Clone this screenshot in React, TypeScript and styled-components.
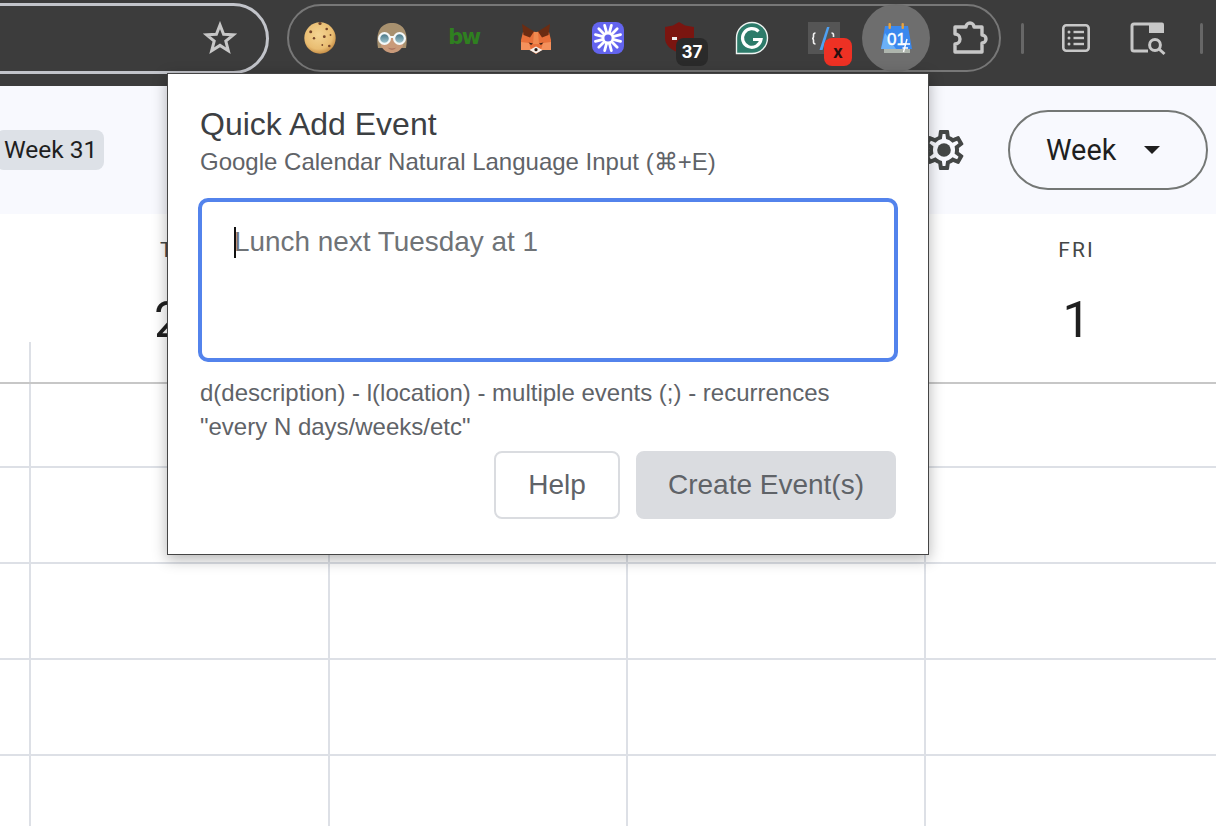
import React from "react";
import styled, { createGlobalStyle } from "styled-components";

const GlobalStyle = createGlobalStyle`
  html, body { margin: 0; padding: 0; background: #fff; }
  * { box-sizing: border-box; }
`;

const Page = styled.div`
  position: relative;
  width: 1216px;
  height: 826px;
  overflow: hidden;
  display: flex;
  flex-direction: column;
  background: #fff;
  font-family: Roboto, "Liberation Sans", sans-serif;
`;

/* ---------- browser toolbar ---------- */
const Toolbar = styled.header`
  flex: none;
  height: 86px;
  padding-bottom: 10px;
  background: #3c3c3c;
  display: flex;
  align-items: center;
  gap: 18px;
`;
const AddressBar = styled.div`
  flex: none;
  width: 309px;
  height: 71px;
  margin-left: -40px;
  padding-right: 29px;
  border: 3px solid #c2c4ca;
  border-radius: 36px;
  display: flex;
  align-items: center;
  justify-content: flex-end;
`;
const ExtensionPill = styled.div`
  flex: none;
  width: 714px;
  height: 68px;
  padding-left: 11px;
  border: 2px solid #777;
  border-radius: 34px;
  display: flex;
  align-items: center;
  gap: 32px;
`;
const ExtensionButton = styled.div<{ $active?: boolean }>`
  position: relative;
  flex: none;
  width: 40px;
  height: 40px;
  display: flex;
  align-items: center;
  justify-content: center;
  &::before {
    content: "";
    display: ${(p) => (p.$active ? "block" : "none")};
    position: absolute;
    left: -14px;
    top: -14px;
    width: 68px;
    height: 68px;
    border-radius: 50%;
    background: #6e6e6e;
  }
  svg { position: relative; display: block; }
`;
const LogoText = styled.span`
  font-family: "DejaVu Sans", sans-serif;
  font-weight: 700;
  font-size: 21px;
  letter-spacing: -1.5px;
  line-height: 1;
  color: #2f8020;
  margin-top: -1px;
`;
const Badge = styled.span<{ $tone: "dark" | "red" }>`
  position: absolute;
  top: 20px;
  left: ${(p) => (p.$tone === "dark" ? "16px" : "20px")};
  width: ${(p) => (p.$tone === "dark" ? "32px" : "28px")};
  height: 28px;
  border-radius: 8px;
  background: ${(p) => (p.$tone === "dark" ? "#2a2a2a" : "#ee3124")};
  color: ${(p) => (p.$tone === "dark" ? "#fff" : "#2a1010")};
  font-family: Inter, "Liberation Sans", sans-serif;
  font-weight: 700;
  font-size: 17px;
  line-height: 28px;
  text-align: center;
`;
const ToolCluster = styled.div`
  flex: none;
  margin-left: 2px;
  display: flex;
  align-items: center;
  gap: 32px;
`;
const ToolSeparator = styled.span`
  flex: none;
  width: 3px;
  height: 31px;
  border-radius: 2px;
  background: #676767;
`;
const ToolIcon = styled.div`
  flex: none;
  width: 40px;
  height: 40px;
  svg { display: block; }
`;

/* ---------- calendar header ---------- */
const CalendarBar = styled.div`
  flex: none;
  height: 128px;
  background: #f8f9fe;
  display: flex;
  align-items: center;
  justify-content: space-between;
  padding-right: 8px;
`;
const WeekChip = styled.span`
  margin-left: -4px;
  padding: 0 7px 0 8px;
  height: 40px;
  border-radius: 8px;
  background: #dde1e7;
  color: #1f1f1f;
  font-size: 24.5px;
  line-height: 40px;
`;
const HeaderActions = styled.div`
  display: flex;
  align-items: center;
  gap: 40px;
`;
const ViewButton = styled.div`
  width: 200px;
  height: 80px;
  padding: 0 46px 0 36px;
  border: 2px solid #747775;
  border-radius: 40px;
  display: flex;
  align-items: center;
  justify-content: space-between;
  color: #1f1f1f;
  font-size: 28.8px;
`;
const Caret = styled.span`
  width: 0;
  height: 0;
  border-left: 8px solid transparent;
  border-right: 8px solid transparent;
  border-top: 8px solid #1f1f1f;
`;

/* ---------- week grid ---------- */
const columns = "29px 299px 298px 298px 298px";
const DayHeader = styled.div`
  flex: none;
  height: 170px;
  display: grid;
  grid-template-columns: ${columns};
  border-bottom: 2px solid #c7c7c7;
`;
const GutterTick = styled.div`
  justify-self: end;
  align-self: end;
  width: 0;
  height: 40px;
  margin-right: -2px;
  border-left: 2px solid #dde0e6;
`;
const DayCell = styled.div`
  padding: 25px 0 0 7px;
  display: flex;
  flex-direction: column;
  align-items: center;
`;
const DayName = styled.span`
  font-size: 21px;
  font-weight: 400;
  line-height: 22px;
  letter-spacing: 2px;
  color: #444746;
`;
const DayNumber = styled.span`
  margin-top: 30px;
  font-size: 50px;
  line-height: 58px;
  color: #1f1f1f;
`;
const GridRow = styled.div<{ $height: number }>`
  flex: none;
  height: ${(p) => p.$height}px;
  display: grid;
  grid-template-columns: ${columns};
  border-bottom: 2px solid #dde0e6;
`;
const HourCell = styled.div`
  border-left: 2px solid #dde0e6;
`;

/* ---------- popup ---------- */
const Popup = styled.section`
  position: absolute;
  left: 167px;
  top: 73px;
  width: 762px;
  height: 482px;
  padding: 32px 31px 0;
  background: #fff;
  border: 1px solid #454545;
  box-shadow: 0 4px 14px rgba(0, 0, 0, 0.3);
  font-family: "Liberation Sans", Arial, sans-serif;
  display: flex;
  flex-direction: column;
`;
const Title = styled.h1`
  margin: 0;
  padding-left: 1px;
  font-size: 32px;
  font-weight: 400;
  line-height: 36px;
  color: #3c4043;
`;
const Subtitle = styled.p`
  margin: 3px 0 0;
  padding-left: 1px;
  font-size: 24px;
  line-height: 34px;
  color: #5f6368;
`;
const FieldWrap = styled.div`
  position: relative;
  margin: 19px -1px 0;
  height: 164px;
`;
const Field = styled.textarea`
  display: block;
  width: 100%;
  height: 100%;
  padding: 21px 32px;
  border: 4px solid #5383ec;
  border-radius: 10px;
  outline: none;
  resize: none;
  background: #fff;
  font-family: inherit;
  font-size: 27.9px;
  line-height: 38px;
  &::placeholder { color: #6f7377; opacity: 1; }
`;
const TextCursor = styled.span`
  position: absolute;
  left: 36px;
  top: 29px;
  width: 2px;
  height: 31px;
  background: #111;
`;
const Hint = styled.p`
  margin: 14px 0 0;
  padding-left: 1px;
  font-size: 24px;
  line-height: 34px;
  color: #5f6368;
`;
const Actions = styled.div`
  margin-top: 7px;
  display: flex;
  justify-content: flex-end;
  gap: 16px;
  padding-right: 1px;
`;
const ActionButton = styled.button<{ $primary?: boolean }>`
  width: ${(p) => (p.$primary ? "260px" : "126px")};
  height: 68px;
  padding: 0;
  border: 2px solid #dadce0;
  border-radius: 8px;
  background: ${(p) => (p.$primary ? "#dadce0" : "#fff")};
  color: #5f6368;
  font-family: inherit;
  font-size: 28px;
`;

/* ---------- icons ---------- */
const Icon40: React.FC<{ children: React.ReactNode }> = ({ children }) => (
  <svg width="40" height="40" viewBox="0 0 40 40">{children}</svg>
);

const StarIcon = () => (
  <svg width="34" height="34" viewBox="0 0 34 34">
    <polygon
      points="17,4 20.6,13.2 30.4,13.8 22.8,20.1 25.3,29.7 17,24.4 8.7,29.7 11.2,20.1 3.6,13.8 13.4,13.2"
      fill="none"
      stroke="#c7c7c7"
      strokeWidth="3"
      strokeLinejoin="miter"
    />
  </svg>
);

const cookieSpots = [
  [20, 5.5, 1.6], [10.7, 13.7, 1.5], [26.7, 11, 1.3], [14, 20.3, 1.2],
  [24.3, 18.7, 1.4], [29.3, 28, 1.3], [22.3, 27, 0.9], [30.5, 17, 0.9],
];
const CookieIcon = () => (
  <Icon40>
    <defs>
      <radialGradient id="cookieFill" cx="45%" cy="40%" r="60%">
        <stop offset="0%" stopColor="#f4d493" />
        <stop offset="75%" stopColor="#e9bd72" />
        <stop offset="100%" stopColor="#c99149" />
      </radialGradient>
    </defs>
    <circle cx="20" cy="20" r="15.7" fill="url(#cookieFill)" />
    {cookieSpots.map(([x, y, r]) => (
      <circle key={`${x}-${y}`} cx={x} cy={y} r={r} fill="#75452a" />
    ))}
  </Icon40>
);

const AvatarIcon = () => (
  <Icon40>
    <defs>
      <linearGradient id="lensFill" x1="0" y1="0" x2="0" y2="1">
        <stop offset="0%" stopColor="#3f6f80" />
        <stop offset="100%" stopColor="#a9cdd6" />
      </linearGradient>
    </defs>
    <path d="M6 30 C3 12 10 5 20 5 C30 5 37 12 34 30 Z" fill="#a8916f" />
    <path d="M9 21 C14 17 26 17 31 21 V28 C28 33 24 35 20 35 C16 35 12 33 9 28 Z" fill="#c99a7a" />
    <path d="M15.5 29.5 Q20 31.5 24.5 29.5 Q20 34 15.5 29.5 Z" fill="#a86e5c" />
    <circle cx="12.5" cy="20.5" r="5.4" fill="url(#lensFill)" stroke="#f4f8f8" strokeWidth="2.2" />
    <circle cx="27.5" cy="20.5" r="5.4" fill="url(#lensFill)" stroke="#f4f8f8" strokeWidth="2.2" />
    <path d="M17.5 19 H22.5" stroke="#f4f8f8" strokeWidth="2" />
  </Icon40>
);

const FoxIcon = () => (
  <Icon40>
    <polygon points="7,14 13,13 20,14 27,13 33,14 35,22 35,32 26,32 23,34 20,36 17,34 14,32 5,32 5,22" fill="#e8703a" />
    <polygon points="6,6 18,13.5 14,19.5 7.5,17" fill="#6b2c12" />
    <polygon points="34,6 22,13.5 26,19.5 32.5,17" fill="#6b2c12" />
    <polygon points="5,24 13,25 15,32 5,32" fill="#f4915c" />
    <polygon points="35,24 27,25 25,32 35,32" fill="#f4915c" />
    <polygon points="18,14 22,14 23,26 17,26" fill="#f08a50" />
    <polygon points="12.5,24.5 17,25.5 15,27" fill="#3a2014" />
    <polygon points="27.5,24.5 23,25.5 25,27" fill="#3a2014" />
    <polygon points="13.5,32 20,28.5 26.5,32 20,35.5" fill="#f6f0ea" />
    <circle cx="20" cy="31.7" r="1.6" fill="#2c1c14" />
  </Icon40>
);

const BurstIcon = () => {
  const spokes = Array.from({ length: 12 }, (_, i) => (i * Math.PI * 2) / 12 + Math.PI / 12);
  return (
    <Icon40>
      <rect x="4" y="4" width="32" height="32" rx="8" fill="#6364ee" />
      {spokes.map((a) => (
        <line
          key={a}
          x1={20 + 6 * Math.cos(a)}
          y1={20 + 6 * Math.sin(a)}
          x2={20 + 13 * Math.cos(a)}
          y2={20 + 13 * Math.sin(a)}
          stroke="#fff"
          strokeWidth="2.8"
          strokeLinecap="round"
        />
      ))}
      <circle cx="20" cy="20" r="5" fill="#6364ee" stroke="#fff" strokeWidth="2.8" />
    </Icon40>
  );
};

const ShieldIcon = () => (
  <Icon40>
    <path d="M19 4 L25 7.5 L34 9 V20 C34 28 26 32 19 35 C12 32 5 28 5 20 V9 L13 7.5 Z" fill="#7a1510" />
    <rect x="12" y="19" width="5" height="3" fill="#eee" />
  </Icon40>
);

const GrammarlyIcon = () => (
  <Icon40>
    <path d="M20 4.5 A15.5 15.5 0 1 1 20 35.5 H4.5 V20 A15.5 15.5 0 0 1 20 4.5 Z" fill="#2d7b6a" stroke="#eef3f1" strokeWidth="1.4" />
    <path d="M26.5 13.5 A9.3 9.3 0 1 0 29 21.5 H21" fill="none" stroke="#fff" strokeWidth="3.2" />
  </Icon40>
);

const DevIcon = () => (
  <Icon40>
    <rect x="4" y="4" width="32" height="32" fill="#555" />
    <path d="M11.5 15 Q9.5 15 9.5 17 V19 Q9.5 20.5 8 20.5 Q9.5 20.5 9.5 22 V24 Q9.5 26 11.5 26" fill="none" stroke="#f2f2f2" strokeWidth="1.6" />
    <path d="M27.5 15 Q29.5 15 29.5 17 V19" fill="none" stroke="#f2f2f2" strokeWidth="1.6" />
    <polygon points="23,9 25.5,9 18.5,32 15.5,32" fill="#4ea1f3" />
  </Icon40>
);

const CalendarIcon = () => (
  <Icon40>
    <polygon points="9,8 32,8 36,31 5,31" fill="#3a88ee" />
    <polygon points="5,31 9,15 20,31" fill="#6bb0f7" />
    <rect x="12.5" y="5" width="2.4" height="6" rx="1" fill="#e8a23c" />
    <rect x="25.5" y="5" width="2.4" height="6" rx="1" fill="#e8a23c" />
    <rect x="8" y="31" width="26" height="4" fill="#aeb5ad" />
    <text x="11" y="27" fontFamily="'Liberation Sans', sans-serif" fontSize="17" stroke="#fff" strokeWidth="0.4" fill="#fff">01</text>
    <path d="M31 21 L27.5 34 M27 26 H34 M26.5 30 H32" stroke="#fff" strokeWidth="1.4" fill="none" />
  </Icon40>
);

const PuzzleIcon = () => (
  <Icon40>
    <path d="M7 9h11a4 4 0 0 1 8 0h8v8a4 4 0 0 1 0 8v9H7v-8a5 5 0 0 0 0-10z" fill="none" stroke="#c7c7c7" strokeWidth="3.4" strokeLinejoin="round" />
  </Icon40>
);

const ListIcon = () => (
  <Icon40>
    <rect x="7.3" y="7.3" width="25.4" height="25.4" rx="3" fill="none" stroke="#c7c7c7" strokeWidth="2.6" />
    {[14, 20, 26].map((y) => (
      <g key={y}>
        <circle cx="13" cy={y} r="1.5" fill="#c7c7c7" />
        <rect x="17.5" y={y - 1.2} width="10.5" height="2.4" fill="#c7c7c7" />
      </g>
    ))}
  </Icon40>
);

const SidePanelSearchIcon = () => (
  <Icon40>
    <path d="M20 33 H6 a2 2 0 0 1 -2 -2 V8 a2 2 0 0 1 2 -2 H21" fill="none" stroke="#c7c7c7" strokeWidth="3" />
    <path d="M21 4.5 H34 a2 2 0 0 1 2 2 V15 H21 Z" fill="#c7c7c7" />
    <circle cx="27" cy="27" r="5.4" fill="none" stroke="#c7c7c7" strokeWidth="3" />
    <path d="M31 31 L36.5 36" stroke="#c7c7c7" strokeWidth="3" />
  </Icon40>
);

const GearIcon = () => (
  <svg width="48" height="48" viewBox="0 0 24 24" fill="#444746">
    <path d="M19.43 12.98c.04-.32.07-.64.07-.98 0-.34-.03-.66-.07-.98l2.11-1.65c.19-.15.24-.42.12-.64l-2-3.46c-.09-.16-.26-.25-.44-.25-.06 0-.12.01-.17.03l-2.49 1c-.52-.4-1.08-.73-1.69-.98l-.38-2.65C14.46 2.18 14.25 2 14 2h-4c-.25 0-.46.18-.49.42l-.38 2.65c-.61.25-1.17.59-1.69.98l-2.49-1c-.06-.02-.12-.03-.18-.03-.17 0-.34.09-.43.25l-2 3.46c-.13.22-.07.49.12.64l2.11 1.65c-.04.32-.07.65-.07.98 0 .33.03.66.07.98l-2.11 1.65c-.19.15-.24.42-.12.64l2 3.46c.09.16.26.25.44.25.06 0 .12-.01.17-.03l2.49-1c.52.4 1.08.73 1.69.98l.38 2.65c.03.24.24.42.49.42h4c.25 0 .46-.18.49-.42l.38-2.65c.61-.25 1.17-.59 1.69-.98l2.49 1c.06.02.12.03.18.03.17 0 .34-.09.43-.25l2-3.46c.12-.22.07-.49-.12-.64l-2.11-1.65zm-1.98-1.71c.04.31.05.52.05.73 0 .21-.02.43-.05.73l-.14 1.13.89.7 1.08.84-.7 1.21-1.27-.51-1.04-.42-.9.68c-.43.32-.84.56-1.25.73l-1.06.43-.16 1.13-.2 1.35h-1.4l-.19-1.35-.16-1.13-1.06-.43c-.43-.18-.83-.41-1.23-.71l-.91-.7-1.06.43-1.27.51-.7-1.21 1.08-.84.89-.7-.14-1.13c-.03-.31-.05-.54-.05-.74s.02-.43.05-.73l.14-1.13-.89-.7-1.08-.84.7-1.21 1.27.51 1.04.42.9-.68c.43-.32.84-.56 1.25-.73l1.06-.43.16-1.13.2-1.35h1.39l.19 1.35.16 1.13 1.06.43c.43.18.83.41 1.23.71l.91.7 1.06-.43 1.27-.51.7 1.21-1.07.85-.89.7.14 1.13z" />
    <circle cx="12" cy="12" r="3.4" />
  </svg>
);

const days = [
  { name: "TUE", num: "29" },
  { name: "WED", num: "30" },
  { name: "THU", num: "31" },
  { name: "FRI", num: "1" },
];
const rowHeights = [84, 96, 96, 96, 96];

export default function App() {
  return (
    <Page>
      <GlobalStyle />
      <Toolbar>
        <AddressBar>
          <StarIcon />
        </AddressBar>
        <ExtensionPill>
          <ExtensionButton><CookieIcon /></ExtensionButton>
          <ExtensionButton><AvatarIcon /></ExtensionButton>
          <ExtensionButton><LogoText>bw</LogoText></ExtensionButton>
          <ExtensionButton><FoxIcon /></ExtensionButton>
          <ExtensionButton><BurstIcon /></ExtensionButton>
          <ExtensionButton>
            <ShieldIcon />
            <Badge $tone="dark">37</Badge>
          </ExtensionButton>
          <ExtensionButton><GrammarlyIcon /></ExtensionButton>
          <ExtensionButton>
            <DevIcon />
            <Badge $tone="red">x</Badge>
          </ExtensionButton>
          <ExtensionButton $active><CalendarIcon /></ExtensionButton>
          <ExtensionButton><PuzzleIcon /></ExtensionButton>
        </ExtensionPill>
        <ToolCluster>
          <ToolSeparator />
          <ToolIcon><ListIcon /></ToolIcon>
          <ToolIcon><SidePanelSearchIcon /></ToolIcon>
          <ToolSeparator />
        </ToolCluster>
      </Toolbar>

      <CalendarBar>
        <WeekChip>Week 31</WeekChip>
        <HeaderActions>
          <GearIcon />
          <ViewButton>
            Week
            <Caret />
          </ViewButton>
        </HeaderActions>
      </CalendarBar>

      <DayHeader>
        <GutterTick />
        {days.map((d) => (
          <DayCell key={d.name}>
            <DayName>{d.name}</DayName>
            <DayNumber>{d.num}</DayNumber>
          </DayCell>
        ))}
      </DayHeader>
      {rowHeights.map((h, i) => (
        <GridRow key={i} $height={h}>
          <span />
          {days.map((d) => (
            <HourCell key={d.name} />
          ))}
        </GridRow>
      ))}

      <Popup>
        <Title>Quick Add Event</Title>
        <Subtitle>Google Calendar Natural Language Input (⌘+E)</Subtitle>
        <FieldWrap>
          <Field readOnly placeholder="Lunch next Tuesday at 1" />
          <TextCursor />
        </FieldWrap>
        <Hint>
          d(description) - l(location) - multiple events (;) - recurrences
          <br />
          "every N days/weeks/etc"
        </Hint>
        <Actions>
          <ActionButton>Help</ActionButton>
          <ActionButton $primary>Create Event(s)</ActionButton>
        </Actions>
      </Popup>
    </Page>
  );
}
